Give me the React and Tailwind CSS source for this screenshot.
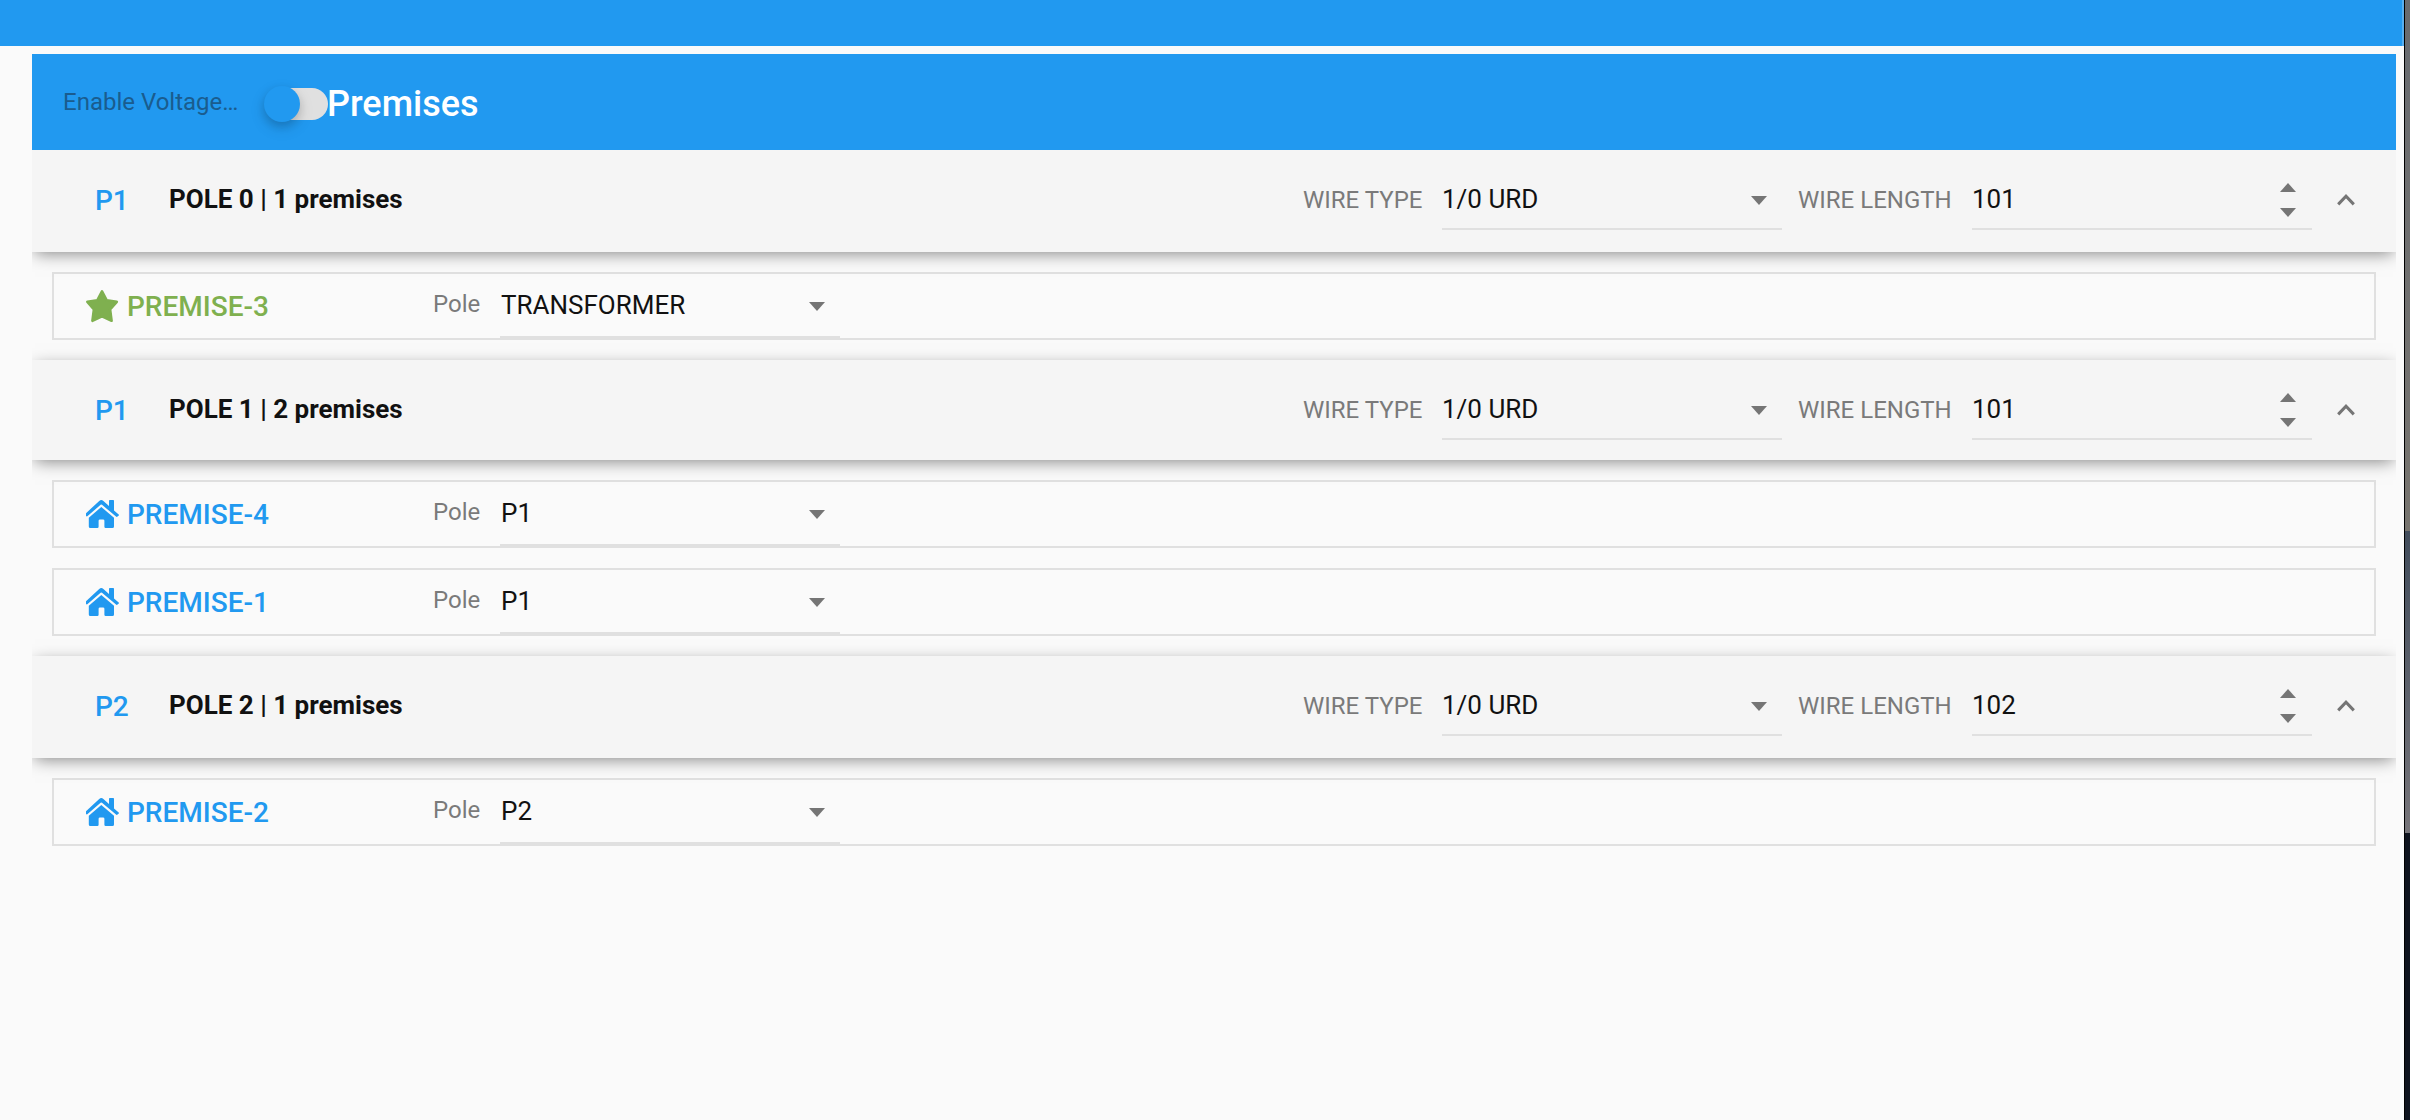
const poles = [
  { tag: "P1", title: "POLE 0 | 1 premises", length: "101", h: "h-[102px]", rows: [{ name: "PREMISE-3", pole: "TRANSFORMER", star: true }] },
  { tag: "P1", title: "POLE 1 | 2 premises", length: "101", h: "h-[100px]", rows: [{ name: "PREMISE-4", pole: "P1" }, { name: "PREMISE-1", pole: "P1" }] },
  { tag: "P2", title: "POLE 2 | 1 premises", length: "102", h: "h-[102px]", rows: [{ name: "PREMISE-2", pole: "P2" }] },
];

const Down = ({ className = "" }) => (
  <svg className={"h-[9px] w-[16px] shrink-0 " + className} viewBox="0 0 16 9" fill="#757575"><path d="M0 0h16L8 9z" /></svg>
);
const Up = ({ className = "" }) => (
  <svg className={"h-[9px] w-[16px] shrink-0 " + className} viewBox="0 0 16 9" fill="#757575"><path d="M0 9h16L8 0z" /></svg>
);
const Star = () => (
  <svg className="mt-[16px] h-[33px] w-[33px] shrink-0" viewBox="0 0 33 33" fill="#7fb04f" stroke="#7fb04f" strokeWidth="2.6" strokeLinejoin="round">
    <path d="M16 1.4 20.6 10.2 30.8 11.8 24.1 19.4 25.6 30.8 16 26.4 6.4 30.8 7.9 19.4 1.4 11.8 11.4 10.2z" />
  </svg>
);
const House = () => (
  <svg className="mt-[18px] h-[28px] w-[33px] shrink-0" viewBox="0 0 33 28" fill="#2199f0">
    <path d="M0 13.2 13.2 1Q15.3-.8 17.4 1L23 6V0.8Q23 0 23.8 0H27.2Q28 0 28 .8V10.6L32.7 14.6Q33.2 15 32.8 15.5L31.2 16.7Q30.7 17.2 30 16.6L16 4.8Q15.3 4.2 14.6 4.8L1.3 16.3Q.7 16.6 0 16z" />
    <path d="M15.3 7 28 17.7V26.5Q28 28 26.5 28H19.6Q18.4 28 18.4 26.8V20.8Q18.4 19.4 17 19.4H14Q12.6 19.4 12.6 20.8V26.8Q12.6 28 11.4 28H4.3Q2.8 28 2.8 26.5V17.7z" />
  </svg>
);

function PoleHeader({ p }) {
  return (
    <div className={"relative flex items-start bg-[#f5f5f5] pl-[63px] shadow-[0_4px_16px_-3px_rgba(0,0,0,0.5)] " + p.h}>
      <div className="mt-[35px] w-[74px] text-[28px] leading-[32px] font-medium text-[#2199f0]">{p.tag}</div>
      <div className="mt-[34px] text-[26px] leading-[30px] font-bold text-[#111]">{p.title}</div>
      <div className="mt-[35px] ml-auto w-[139px] text-[24px] leading-[30px] text-[#7a7a7a]">WIRE TYPE</div>
      <div className="flex h-[80px] w-[340px] items-start border-b-2 border-[#e0e0e0] pr-[15px]">
        <span className="mt-[34px] text-[26px] leading-[30px] text-[#111]">1/0 URD</span>
        <Down className="mt-[46px] ml-auto" />
      </div>
      <div className="mt-[35px] ml-[16px] w-[174px] text-[24px] leading-[30px] text-[#7a7a7a]">WIRE LENGTH</div>
      <div className="flex h-[80px] w-[340px] items-start border-b-2 border-[#e0e0e0] pr-[16px]">
        <span className="mt-[34px] text-[26px] leading-[30px] text-[#111]">{p.length}</span>
        <span className="mt-[33px] ml-auto flex flex-col gap-4"><Up /><Down /></span>
      </div>
      <svg className="mt-[43px] mr-[41px] ml-[25px] h-[13px] w-[18px]" viewBox="0 0 18 13" fill="none" stroke="#757575" strokeWidth="3"><path d="M1.2 11.4 9 3.2l7.8 8.2" /></svg>
    </div>
  );
}

function Premise({ r }) {
  return (
    <div className="flex h-[68px] items-start border-2 border-[#e0e0e0] bg-[#fafafa] pl-[32px]">
      {r.star ? <Star /> : <House />}
      <div className={"mt-[17px] ml-[8px] w-[306px] text-[28px] leading-[32px] font-medium " + (r.star ? "text-[#7fb04f]" : "text-[#2199f0]")}>{r.name}</div>
      <div className="mt-[15px] w-[67px] text-[24px] leading-[30px] text-[#7a7a7a]">Pole</div>
      <div className="flex h-[64px] w-[340px] items-start border-b-2 border-[#e0e0e0] pr-[15px] pl-px">
        <span className="mt-[16px] text-[26px] leading-[30px] text-[#111]">{r.pole}</span>
        <Down className="mt-[28px] ml-auto" />
      </div>
    </div>
  );
}

export default function App() {
  return (
    <div className="flex h-[1120px] w-[2410px] overflow-hidden bg-[#fafafa] font-[Roboto,sans-serif]">
      <div className="w-[2404px]">
        <div className="h-[46px] border-r-2 border-[#58aff0] bg-[#2199f0]" />
        <div className="mt-[8px] ml-[32px] w-[2364px]">
          <div className="flex h-[96px] items-start bg-[#2199f0] pl-[31px]">
            <div className="mt-[33px] w-[201px] text-[24px] leading-[30px] text-[#1a5c8e]">Enable Voltage…</div>
            <div className="mt-[32px] flex h-[36px] w-[63px] items-center">
              <div className="ml-px flex h-[32px] w-[63px] shrink-0 items-center rounded-full bg-[#e0e0e0]">
                <div className="-ml-px h-[36px] w-[36px] rounded-full bg-[#2199f0] shadow-[0_4px_8px_rgba(0,0,0,0.14),0_6px_16px_rgba(0,0,0,0.12)]" />
              </div>
            </div>
            <div className="mt-[29px] text-[36px] leading-[42px] font-medium text-white">Premises</div>
          </div>
          <div className="overflow-hidden pb-5">
            {poles.map((p) => (
              <section key={p.title}>
                <PoleHeader p={p} />
                <div className="flex flex-col gap-5 p-5">{p.rows.map((r) => <Premise key={r.name} r={r} />)}</div>
              </section>
            ))}
          </div>
        </div>
      </div>
      <div className="flex h-full w-[6px] flex-col border-l border-black">
        <div className="h-[531px] bg-gradient-to-b from-[#686b70] to-[#77746f]" />
        <div className="h-[302px] bg-gradient-to-b from-[#424d5c] to-[#77757a]" />
        <div className="flex-1 bg-[#0e131e]" />
      </div>
    </div>
  );
}
